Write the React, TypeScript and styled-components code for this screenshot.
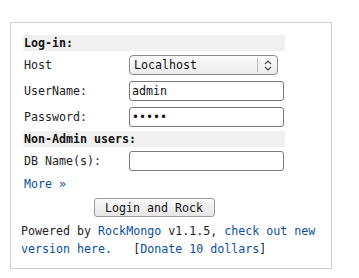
import React from "react";
import styled, { createGlobalStyle } from "styled-components";

const Global = createGlobalStyle`
  html, body { margin: 0; padding: 0; background: #fff; }
  body { font-family: "DejaVu Sans Mono", monospace; font-size: 11.65px; color: #222; }
`;

const Box = styled.div`
  box-sizing: border-box;
  margin: 22px 0 0 10px;
  width: 322px;
  height: 247px;
  border: 1px solid #d0d0d0;
  padding: 10px;
`;

const Table = styled.div`
  display: flex;
  flex-direction: column;
  gap: 2px;
  margin: 2px 0 0 2px;
  width: 262px;
`;

const Band = styled.div`
  height: 16px;
  line-height: 16px;
  background: #f0f0f0;
  font-weight: bold;
  padding-left: 1px;
  color: #111;
`;

const Row = styled.div<{ $h?: number }>`
  display: grid;
  grid-template-columns: 104px 156px;
  column-gap: 2px;
  height: ${(p) => p.$h ?? 24}px;
  align-items: center;
`;

const Label = styled.div`
  padding-left: 1px;
  line-height: 14px;
`;

const TextInput = styled.input`
  box-sizing: border-box;
  width: 155px;
  height: 20px;
  margin: 0;
  padding: 0 2px;
  border: 1px solid #7a7a7a;
  border-radius: 3px;
  font-family: "DejaVu Sans Mono", monospace;
  font-size: 11.65px;
  color: #111;
  background: #fff;
  outline: none;
`;

const Select = styled.div`
  box-sizing: border-box;
  width: 149px;
  height: 20px;
  border: 1px solid #8a8a8a;
  border-radius: 4px;
  background: linear-gradient(#fbfbfb, #ececec);
  display: flex;
  align-items: center;
  color: #111;
`;

const SelectText = styled.span`
  flex: 1;
  padding-left: 4px;
`;

const SelectArrow = styled.span`
  width: 19px;
  height: 14px;
  border-left: 1px solid #b8b8b8;
  display: flex;
  align-items: center;
  justify-content: center;
`;

const Link = styled.a`
  color: #0b4f9c;
  text-decoration: none;
`;

const MoreRow = styled.div`
  height: 18px;
  line-height: 18px;
  padding-left: 1px;
`;

const ButtonRow = styled.div`
  height: 27px;
  display: flex;
  justify-content: center;
  align-items: flex-start;
`;

const Button = styled.button`
  box-sizing: border-box;
  margin-top: 3px;
  width: 121px;
  height: 19px;
  padding: 0;
  border: 1px solid #9a9a9a;
  border-radius: 3px;
  background: linear-gradient(#fafafa, #e6e6e6);
  font-family: "DejaVu Sans Mono", monospace;
  font-size: 11.65px;
  color: #111;
`;

const Footer = styled.div`
  line-height: 18px;
  color: #222;
`;

export default function App() {
  return (
    <>
      <Global />
      <Box>
        <Table>
          <Band>Log-in:</Band>
          <Row>
            <Label>Host</Label>
            <Select>
              <SelectText>Localhost</SelectText>
              <SelectArrow>
                <svg width="8" height="11" viewBox="0 0 8 11">
                  <path d="M1 4 L4 1 L7 4 M1 7 L4 10 L7 7" fill="none" stroke="#444" strokeWidth="1.1" />
                </svg>
              </SelectArrow>
            </Select>
          </Row>
          <Row>
            <Label>UserName:</Label>
            <TextInput type="text" defaultValue="admin" />
          </Row>
          <Row>
            <Label>Password:</Label>
            <TextInput type="password" defaultValue="admin" />
          </Row>
          <Band>Non-Admin users:</Band>
          <Row>
            <Label>DB Name(s):</Label>
            <TextInput type="text" defaultValue="" />
          </Row>
          <MoreRow>
            <Link href="#">More »</Link>
          </MoreRow>
          <ButtonRow>
            <Button>Login and Rock</Button>
          </ButtonRow>
        </Table>
        <Footer>
          Powered by <Link href="#">RockMongo</Link> v1.1.5, <Link href="#">check out new version here.</Link>
          {"\u00a0\u00a0\u00a0"}[<Link href="#">Donate 10 dollars</Link>]
        </Footer>
      </Box>
    </>
  );
}
